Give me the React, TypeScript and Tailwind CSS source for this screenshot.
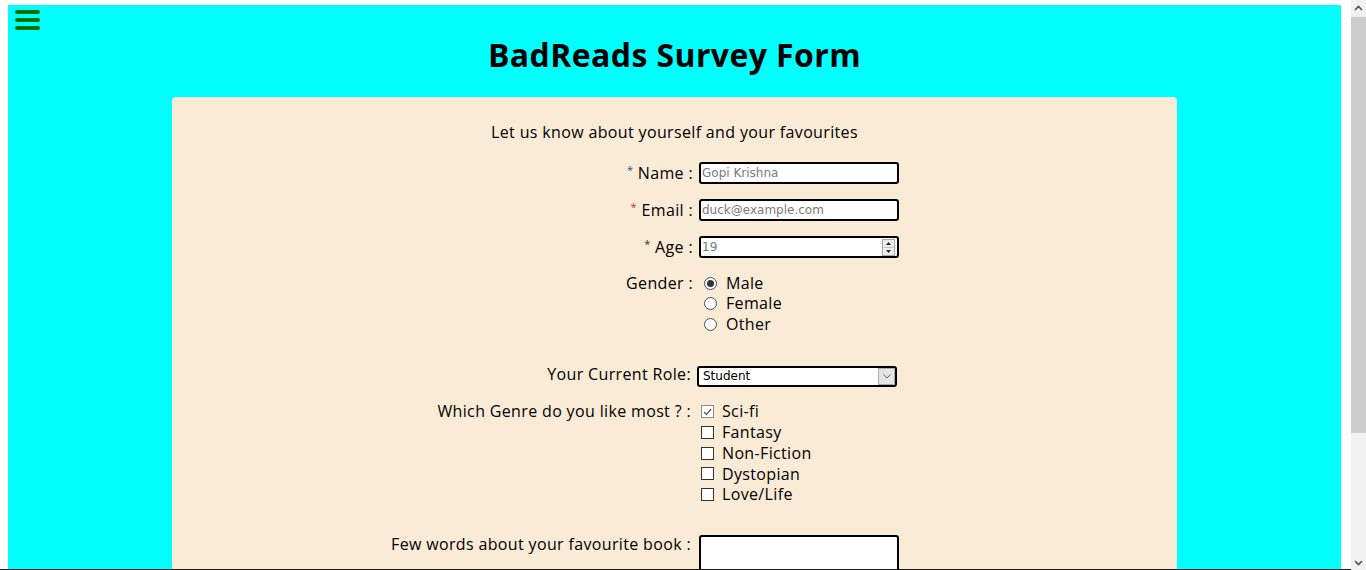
import React from "react";

const Radio = ({ checked }: { checked?: boolean }) => (
  <span className="flex h-[13px] w-[13px] items-center justify-center rounded-full border border-[#4a4a4a] bg-white">
    {checked && <span className="h-[7px] w-[7px] rounded-full bg-[#333]" />}
  </span>
);

const Check = ({ checked }: { checked?: boolean }) =>
  checked ? (
    <span className="flex h-[13px] w-[13px] items-center justify-center border border-[#8a8a8a] bg-white">
      <svg width="9" height="8" viewBox="0 0 9 8">
        <polyline points="1,4 3.5,6.5 8,1" fill="none" stroke="#5a5a5a" strokeWidth="1.3" />
      </svg>
    </span>
  ) : (
    <span className="h-[13px] w-[13px] border border-[#333] bg-white" />
  );

export default function App() {
  return (
    <div className="flex h-[570px] w-[1366px] overflow-hidden bg-white font-['Open_Sans',sans-serif] text-black">
      <div className="flex h-[570px] w-[1351px] flex-col overflow-hidden border-b border-[#1a1a1a]">
        <div className="ml-[8px] mr-[10px] mt-[5px] flex flex-1 flex-col bg-[#00ffff]">
          <div className="ml-[7px] mt-[5px] flex w-[25px] flex-col gap-[4px]">
            <span className="h-[4px] rounded-full bg-[#007000]" />
            <span className="h-[4px] rounded-full bg-[#007000]" />
            <span className="h-[4px] rounded-full bg-[#007000]" />
          </div>
          <h1 className="mt-[3px] text-center text-[32px] font-bold leading-[44px] tracking-[0.4px]">BadReads Survey Form</h1>
          <div className="mx-auto mt-[20px] w-[1005px] rounded-[4px] bg-[#faebd7] pb-[40px] pt-[24px] text-[16px] tracking-[0.35px]">
            <p className="text-center leading-[22px]">Let us know about yourself and your favourites</p>

            <div className="mt-[19px] flex items-center">
              <div className="w-[521px] text-right leading-[22px]">
                <sup className="text-[11px] text-[#2d4f86]">*</sup> Name :
              </div>
              <input
                className="ml-[6px] h-[22px] w-[200px] rounded-[3px] border-2 border-black bg-white px-[1px] font-['DejaVu_Sans',sans-serif] text-[12px] tracking-normal outline-none placeholder:text-[#7a7a7a]"
                placeholder="Gopi Krishna"
              />
            </div>

            <div className="mt-[15px] flex items-center">
              <div className="w-[521px] text-right leading-[22px]">
                <sup className="text-[11px] text-[#c0392b]">*</sup> Email :
              </div>
              <input
                className="ml-[6px] h-[22px] w-[200px] rounded-[3px] border-2 border-black bg-white px-[1px] font-['DejaVu_Sans',sans-serif] text-[12px] tracking-normal outline-none placeholder:text-[#7a7a7a]"
                placeholder="duck@example.com"
              />
            </div>

            <div className="mt-[15px] flex items-center">
              <div className="w-[521px] text-right leading-[22px]">
                <sup className="text-[11px] text-[#333]">*</sup> Age :
              </div>
              <div className="ml-[6px] flex h-[22px] w-[200px] items-center rounded-[3px] border-2 border-black bg-white">
                <input
                  className="h-full min-w-0 flex-1 bg-transparent px-[1px] font-['DejaVu_Sans',sans-serif] text-[12px] tracking-normal outline-none placeholder:text-[#7a7a7a]"
                  placeholder="19"
                />
                <div className="mr-[2px] flex h-[17px] w-[13px] flex-col border border-[#a8a8a8] bg-[#ececec]">
                  <div className="flex flex-1 items-center justify-center border-b border-[#c4c4c4]">
                    <svg width="5" height="3" viewBox="0 0 5 3">
                      <polygon points="0,3 2.5,0 5,3" fill="#222" />
                    </svg>
                  </div>
                  <div className="flex flex-1 items-center justify-center">
                    <svg width="5" height="3" viewBox="0 0 5 3">
                      <polygon points="0,0 5,0 2.5,3" fill="#222" />
                    </svg>
                  </div>
                </div>
              </div>
            </div>

            <div className="mt-[14.75px] flex items-start">
              <div className="w-[521px] text-right leading-[20.5px]">Gender :</div>
              <div className="ml-[4px] flex flex-col">
                {[
                  ["Male", true],
                  ["Female", false],
                  ["Other", false],
                ].map(([l, c]) => (
                  <div key={l as string} className="flex h-[20.5px] items-center">
                    <span className="ml-[7px]">
                      <Radio checked={c as boolean} />
                    </span>
                    <span className="ml-[9px] leading-[20.5px]">{l as string}</span>
                  </div>
                ))}
              </div>
            </div>

            <div className="mt-[28.5px] flex items-center">
              <div className="w-[519px] pb-[5px] text-right leading-[22px]">Your Current Role:</div>
              <div className="ml-[6px] flex h-[21px] w-[200px] items-center justify-between rounded-[3px] border-2 border-black bg-white pl-[4px]">
                <span className="font-['DejaVu_Sans',sans-serif] text-[12px] leading-[14px] tracking-normal">Student</span>
                <span className="flex h-[17px] w-[17px] items-center justify-center border border-[#ababab] bg-[#e4e4e4]">
                  <svg width="8" height="5" viewBox="0 0 8 5">
                    <polyline points="0.5,0.5 4,4 7.5,0.5" fill="none" stroke="#666" strokeWidth="1" />
                  </svg>
                </span>
              </div>
            </div>

            <div className="mt-[11.6px] flex items-start">
              <div className="w-[519px] text-right leading-[20.75px]">Which Genre do you like most ? :</div>
              <div className="ml-[6px] flex flex-col">
                {[
                  ["Sci-fi", true],
                  ["Fantasy", false],
                  ["Non-Fiction", false],
                  ["Dystopian", false],
                  ["Love/Life", false],
                ].map(([l, c]) => (
                  <div key={l as string} className="flex h-[20.75px] items-center">
                    <span className="ml-[4px] flex">
                      <Check checked={c as boolean} />
                    </span>
                    <span className="ml-[8px] leading-[20.75px]">{l as string}</span>
                  </div>
                ))}
              </div>
            </div>

            <div className="mt-[27.65px] flex items-start">
              <div className="w-[519px] text-right leading-[22px]">Few words about your favourite book :</div>
              <textarea className="ml-[8px] mt-[2px] h-[60px] w-[200px] resize-none rounded-[3px] border-2 border-black bg-white outline-none" />
            </div>
          </div>
        </div>
      </div>
      <div className="flex w-[15px] flex-col bg-[#f1f1f1]">
        <div className="flex h-[15px] items-center justify-center">
          <svg width="9" height="6" viewBox="0 0 9 6">
            <polyline points="1,5 4.5,1.5 8,5" fill="none" stroke="#505050" strokeWidth="1.6" />
          </svg>
        </div>
        <div className="mt-[2px] h-[416px] bg-[#cdcdcd]" />
        <div className="flex-1" />
        <div className="flex h-[15px] items-center justify-center">
          <svg width="9" height="6" viewBox="0 0 9 6">
            <polyline points="1,1 4.5,4.5 8,1" fill="none" stroke="#505050" strokeWidth="1.6" />
          </svg>
        </div>
      </div>
    </div>
  );
}
